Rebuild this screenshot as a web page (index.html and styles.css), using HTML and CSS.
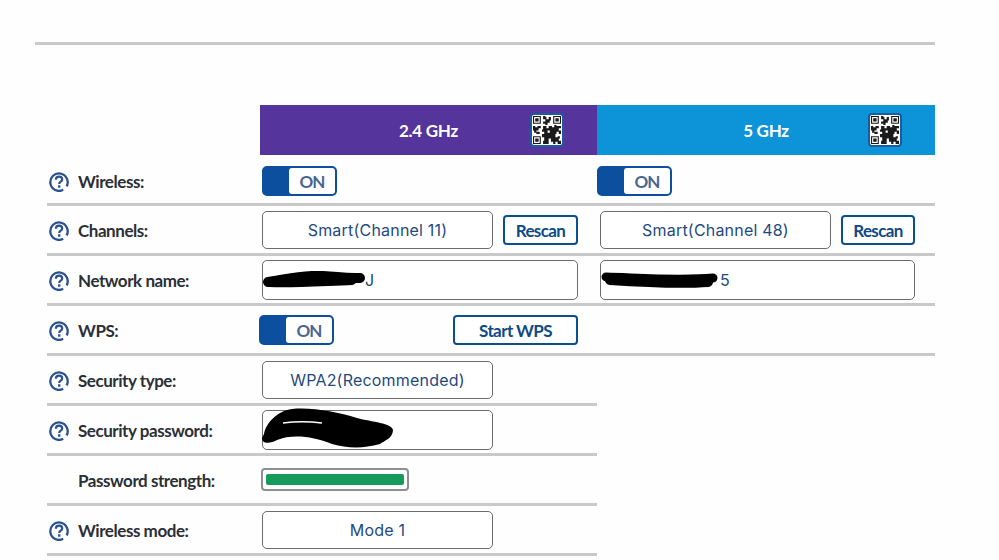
FILE: index.html
```html
<!DOCTYPE html>
<html lang="en">
<head>
    <meta charset="UTF-8">
    <meta name="viewport" content="width=device-width, initial-scale=1.0">
    <link rel="stylesheet" href="styles.css">
    <title>Wireless Settings</title>
</head>
<body>
    <!-- shared icons -->
    <svg class="defs" aria-hidden="true">
        <symbol id="help" viewBox="0 0 20 20">
            <path d="M14.200 17.800A8.700 8.700 0 1 1 17.600 14.400" fill="none" stroke="#2b5190" stroke-width="2.300"/>
            <path d="M6.900 7.800c0-2 1.400-3.100 3.200-3.100s3.100 1 3.100 2.700c0 2.300-3 2.300-3 4.500" fill="none" stroke="#2b5190" stroke-width="2.200"/>
            <rect x="9" y="13.300" width="2.400" height="2.400" fill="#2b5190"/>
        </symbol>
        <symbol id="qr" viewBox="0 0 25 25">
            <path d="M0 0h7v7H0zM1 1v5h5V1zM2 2h3v3H2zM18 0h7v7h-7zM19 1v5h5V1zM20 2h3v3h-3zM0 18h7v7H0zM1 19v5h5v-5zM2 20h3v3H2z" fill-rule="evenodd"/>
            <path d="M9 0h2v1h1v2h2V1h2v3h-1v2h-2v2h-2V7H9V5h2V3H9zM0 9h2v1h2V9h3v2H5v2H3v1h3v2H3v-1H1v-2H0zM9 9h3v2h2V9h3v1h2V8h2v1h4v2h-2v2h2v3h-2v-2h-2v2h-1v3h2v-1h2v2h-1v2h2v3h-3v-2h-2v2h-2v-2h-2v-3h-2v5H9v-3h1v-3H8v-3h2v-2H8v-2h1zM13 13v2h2v-2z" fill-rule="evenodd"/>
        </symbol>
    </svg>

    <div class="page">
        <hr class="top-rule">

        <div class="bands">
            <div class="band band-purple">
                <span class="band-title">2.4 GHz</span>
                <span class="qr"><svg width="28" height="28"><use href="#qr"/></svg></span>
            </div>
            <div class="band band-blue">
                <span class="band-title">5 GHz</span>
                <span class="qr"><svg width="28" height="28"><use href="#qr"/></svg></span>
            </div>
        </div>

        <div class="row row-first">
            <div class="label"><svg class="help"><use href="#help"/></svg>Wireless:</div>
            <div class="cell"><div class="toggle"><span class="toggle-on">ON</span></div></div>
            <div class="cell cell-right"><div class="toggle toggle-flush"><span class="toggle-on">ON</span></div></div>
        </div>

        <div class="row">
            <div class="label"><svg class="help"><use href="#help"/></svg>Channels:</div>
            <div class="cell">
                <div class="field field-select">Smart(Channel 11)</div>
                <button class="btn btn-rescan" type="button">Rescan</button>
            </div>
            <div class="cell cell-right">
                <div class="field field-select">Smart(Channel 48)</div>
                <button class="btn btn-rescan" type="button">Rescan</button>
            </div>
        </div>

        <div class="row">
            <div class="label"><svg class="help"><use href="#help"/></svg>Network name:</div>
            <div class="cell">
                <div class="field field-text">
                    <svg class="scribble" width="106" height="18" viewBox="0 0 106 18"><path d="M6 11C22 9 30 6 50 5S80 8 98 7" fill="none" stroke="#000" stroke-width="10" stroke-linecap="round"/><path d="M8 12C30 13 60 11 90 10" fill="none" stroke="#000" stroke-width="8" stroke-linecap="round"/></svg>
                    <span class="tail">J</span>
                </div>
            </div>
            <div class="cell cell-right">
                <div class="field field-text">
                    <svg class="scribble" width="120" height="18" viewBox="0 0 120 18"><path d="M6 6C40 7 80 10 113 7" fill="none" stroke="#000" stroke-width="9" stroke-linecap="round"/><path d="M10 9C40 11 80 13 108 11" fill="none" stroke="#000" stroke-width="10" stroke-linecap="round"/></svg>
                    <span>5</span>
                </div>
            </div>
        </div>

        <div class="row">
            <div class="label"><svg class="help"><use href="#help"/></svg>WPS:</div>
            <div class="cell cell-split">
                <div class="toggle toggle-flush"><span class="toggle-on">ON</span></div>
                <button class="btn btn-wps" type="button">Start WPS</button>
            </div>
            <div class="cell cell-right"></div>
        </div>

        <div class="row row-short">
            <div class="label"><svg class="help"><use href="#help"/></svg>Security type:</div>
            <div class="cell"><div class="field field-select">WPA2(Recommended)</div></div>
        </div>

        <div class="row row-short">
            <div class="label"><svg class="help"><use href="#help"/></svg>Security password:</div>
            <div class="cell">
                <div class="field field-text field-short">
                    <svg class="scribble scribble-tall" width="131" height="41" viewBox="0 0 131 41"><path d="M2 26C4 15 15 3 30 1C50-1 75 4 95 10C110 14 130 15 131 22C131 30 122 33 118 36C100 41 85 40 70 36C50 28 30 26 15 32C8 36 0 36 0 30Z" fill="#000"/><path d="M21 15C32 13.500 48 13.500 60 15" fill="none" stroke="#fff" stroke-width="1.500"/></svg>
                </div>
            </div>
        </div>

        <div class="row row-short">
            <div class="label label-plain">Password strength:</div>
            <div class="cell"><div class="strength"><div class="strength-bar"></div></div></div>
        </div>

        <div class="row row-short">
            <div class="label"><svg class="help"><use href="#help"/></svg>Wireless mode:</div>
            <div class="cell"><div class="field field-select">Mode 1</div></div>
        </div>
    </div>
</body>
</html>
```

FILE: styles.css
```css
body {
    font-family: "Lato", "Liberation Sans", sans-serif;
    margin: 0;
    padding: 0;
    background-color: #fefefe;
    color: #2b2f36;
    overflow: hidden;
}

.defs {
    display: none;
}

.page {
    width: 999px;
    height: 560px;
    overflow: hidden;
}

.top-rule {
    width: 900px;
    height: 3px;
    margin: 42px 0 60px 35px;
    border: none;
    background-color: #c9c9c9;
}

.bands {
    display: grid;
    grid-template-columns: 337px 338px;
    margin-left: 260px;
}

.band {
    display: grid;
    grid-template-columns: 1fr auto 1fr;
    align-items: center;
    height: 50px;
    color: #fff;
}

.band-purple {
    background-color: #55349b;
}

.band-blue {
    background-color: #0d94d8;
}

.band-title {
    grid-column: 2;
    font-size: 17px;
    font-weight: 700;
    letter-spacing: -0.3px;
}

.qr {
    grid-column: 3;
    justify-self: end;
    display: flex;
    align-items: center;
    justify-content: center;
    width: 34px;
    height: 34px;
    margin-right: 33px;
    margin-bottom: 1px;
    box-sizing: border-box;
    background-color: #fff;
    border: 2px solid #1c5a9f;
    border-radius: 4px;
}

.qr svg {
    fill: #1a1a1a;
}

.row {
    display: grid;
    grid-template-columns: 213px 337px 338px;
    align-items: center;
    width: 888px;
    height: 50px;
    margin-left: 47px;
    box-sizing: border-box;
    border-bottom: 3px solid #c9c9c9;
}

.row-first {
    height: 51px;
    padding-top: 3px;
}

.row-short {
    width: 550px;
    grid-template-columns: 213px 337px;
}

.label {
    display: flex;
    align-items: center;
    gap: 9px;
    padding-top: 2px;
    padding-left: 2px;
    font-size: 17px;
    font-weight: 700;
    letter-spacing: -0.45px;
}

.label-plain {
    padding-left: 31px;
}

.help {
    width: 20px;
    height: 20px;
    margin-top: 1px;
    flex-shrink: 0;
}

.cell {
    display: flex;
    align-items: center;
    gap: 10px;
    padding: 0 19px 0 2px;
}

.cell-right {
    padding: 0 20px 0 3px;
}

.cell-split {
    justify-content: space-between;
}

.toggle {
    display: flex;
    justify-content: flex-end;
    width: 75px;
    height: 30px;
    box-sizing: border-box;
    border: 2px solid #0b4f9e;
    border-radius: 5px;
    background-color: #0b4f9e;
}

.toggle-flush {
    margin-left: -3px;
}

.toggle-on {
    display: flex;
    align-items: center;
    justify-content: center;
    width: 46px;
    padding-top: 1px;
    box-sizing: border-box;
    border-radius: 3px;
    background-color: #fff;
    color: #4a6590;
    font-size: 17px;
    font-weight: 700;
    letter-spacing: -0.8px;
}

.field {
    display: flex;
    align-items: center;
    box-sizing: border-box;
    background-color: #fff;
    border: 1px solid #6b6b6b;
    border-radius: 5px;
    color: #1f4a80;
    font-family: "Inter", "Liberation Sans", sans-serif;
    font-size: 16px;
    letter-spacing: 0.2px;
}

.field-select {
    justify-content: center;
    width: 231px;
    height: 38px;
    flex-shrink: 0;
}

.field-text {
    flex: 1;
    height: 40px;
}

.field-short {
    flex: none;
    width: 231px;
}

.scribble {
    flex-shrink: 0;
    margin-left: -1px;
}

.scribble-tall {
    margin-top: -3px;
    margin-bottom: -1px;
}

.tail {
    margin-left: -3px;
}

.btn {
    width: 75px;
    height: 30px;
    padding: 2px 0 0;
    box-sizing: border-box;
    background-color: #fff;
    border: 2px solid #0b4f8e;
    border-radius: 4px;
    color: #0d4a86;
    font-family: "Lato", "Liberation Sans", sans-serif;
    font-size: 17px;
    font-weight: 700;
    letter-spacing: -0.6px;
    cursor: pointer;
}

.btn-wps {
    width: 125px;
}

.strength {
    display: flex;
    align-items: center;
    width: 148px;
    height: 23px;
    margin-left: -1px;
    padding: 0 3px;
    box-sizing: border-box;
    background-color: #fff;
    border: 2px solid #8f8f8f;
    border-radius: 4px;
}

.strength-bar {
    width: 100%;
    height: 11px;
    border-radius: 2px;
    background-color: #169b5c;
}
```
